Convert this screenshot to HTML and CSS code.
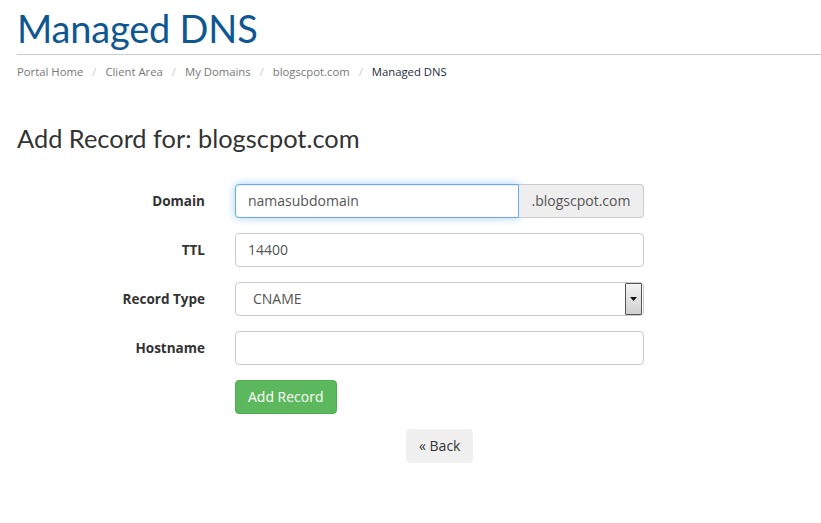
FILE: index.html
```html
<!DOCTYPE html>
<html>
<head>
<meta charset="utf-8">
<link rel="stylesheet" href="styles.css">
</head>
<body>
<div class="page">
  <div class="header">
    <h1 class="title">Managed DNS</h1>
  </div>
  <ol class="crumbs">
    <li><a>Portal Home</a></li>
    <li class="sep">/</li>
    <li><a>Client Area</a></li>
    <li class="sep">/</li>
    <li><a>My Domains</a></li>
    <li class="sep">/</li>
    <li><a>blogscpot.com</a></li>
    <li class="sep">/</li>
    <li class="active">Managed DNS</li>
  </ol>
  <h2 class="subtitle">Add Record for: blogscpot.com</h2>
  <form class="form">
    <div class="row">
      <label class="label">Domain</label>
      <div class="group">
        <div class="input focus">namasubdomain</div>
        <div class="addon">.blogscpot.com</div>
      </div>
    </div>
    <div class="row">
      <label class="label">TTL</label>
      <div class="input">14400</div>
    </div>
    <div class="row">
      <label class="label">Record Type</label>
      <div class="input select"><span class="sel-text">CNAME</span><span class="arrow"><svg width="7" height="4" viewBox="0 0 7 4"><path d="M0 0H7L3.5 4Z" fill="#111"/></svg></span></div>
    </div>
    <div class="row">
      <label class="label">Hostname</label>
      <div class="input"></div>
    </div>
    <div class="row">
      <span class="label"></span>
      <div><span class="btn btn-green">Add Record</span></div>
    </div>
  </form>
  <div class="back-wrap"><span class="btn btn-default">« Back</span></div>
</div>
</body>
</html>
```
FILE: styles.css
```css
html, body {
  margin: 0;
  padding: 0;
  background: #fff;
}
body {
  font-family: "Open Sans", "Liberation Sans", sans-serif;
  color: #333;
}
.page {
  padding-left: 17px;
}
.header {
  border-bottom: 1px solid #ccc;
  height: 55px;
  box-sizing: border-box;
}
.title {
  margin: 0;
  padding-top: 5px;
  font-family: Lato, "Open Sans", sans-serif;
  font-weight: 400;
  font-size: 38px;
  line-height: 46px;
  color: #0f5791;
  letter-spacing: -0.2px;
}
.crumbs {
  list-style: none;
  margin: 0;
  padding: 9px 0 0 0;
  display: flex;
  font-size: 11.3px;
  line-height: 16px;
  height: 16px;
}
.crumbs li a {
  color: #777;
}
.crumbs .sep {
  color: #ccc;
  padding: 0 9px;
}
.crumbs .active {
  color: #1e2b3b;
}
.subtitle {
  margin: 0;
  padding-top: 43px;
  font-family: Lato, "Open Sans", sans-serif;
  font-weight: 400;
  font-size: 25.4px;
  line-height: 30px;
  color: #333;
  height: 30px;
}
.form {
  margin-top: 31px;
  display: flex;
  flex-direction: column;
  gap: 15px;
}
.row {
  display: grid;
  grid-template-columns: 188px 409px;
  column-gap: 30px;
  align-items: center;
}
.label {
  text-align: right;
  font-weight: 700;
  font-size: 13.5px;
  color: #333;
}
.group {
  display: flex;
}
.input {
  box-sizing: border-box;
  height: 34px;
  border: 1px solid #ccc;
  border-radius: 4px;
  padding: 0 12px;
  font-size: 14px;
  line-height: 32px;
  color: #555;
  background: #fff;
}
.group .input {
  flex: 1;
  border-radius: 4px 0 0 4px;
}
.input.focus {
  border-color: #66afe9;
  box-shadow: inset 0 1px 1px rgba(0,0,0,.075), 0 0 8px rgba(102,175,233,.6);
}
.addon {
  box-sizing: border-box;
  height: 34px;
  width: 125px;
  border: 1px solid #ccc;
  border-left: 0;
  border-radius: 0 4px 4px 0;
  background: #eee;
  font-size: 14px;
  line-height: 32px;
  color: #555;
  text-align: center;
}
.select {
  display: flex;
  justify-content: space-between;
  align-items: stretch;
  padding: 0 1px 0 17px;
}
.sel-text {
  line-height: 32px;
}
.arrow {
  box-sizing: border-box;
  width: 17px;
  border: 1px solid #555;
  border-radius: 1px;
  background: linear-gradient(#f4f4f4, #d0d0d0);
  display: flex;
  align-items: center;
  justify-content: center;
}
.btn {
  display: inline-block;
  box-sizing: border-box;
  height: 34px;
  padding: 0 12px;
  font-size: 14px;
  line-height: 32px;
  border-radius: 4px;
  border: 1px solid transparent;
}
.btn-green {
  background: #5cb85c;
  border-color: #4cae4c;
  color: #fff;
}
.btn-default {
  background: #f0f0f0;
  border-color: #f0f0f0;
  color: #333;
}
.back-wrap {
  margin-top: 15px;
  padding-left: 389px;
}
```
